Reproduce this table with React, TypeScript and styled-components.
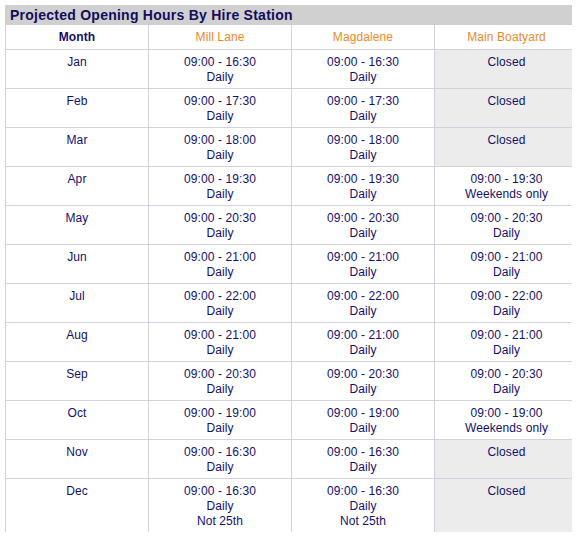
import React from "react";
import styled, { createGlobalStyle } from "styled-components";

const Global = createGlobalStyle`
  body {
    margin: 5px;
    background: #ffffff;
    font-family: "Liberation Sans", Arial, sans-serif;
  }
`;

const Wrapper = styled.div`
  width: 567px;
`;

const TitleBar = styled.div`
  height: 20px;
  background: #d0d0d0;
  color: #140c5c;
  font-weight: bold;
  font-size: 14px;
  letter-spacing: 0.25px;
  line-height: 20px;
  padding-left: 5px;
  box-sizing: border-box;
`;

const Grid = styled.div`
  display: grid;
  grid-template-columns: 143px 143px 143px 138px;
`;

const Cell = styled.div<{ $closed?: boolean; $last?: boolean; $edge?: boolean }>`
  box-sizing: border-box;
  border-left: 1px solid #d3d0e2;
  border-bottom: ${(p) => (p.$last ? "none" : "1px solid #d3d0e2")};
  background: ${(p) => (p.$closed ? "#ececec" : "#ffffff")};
  padding: 5px 2px 3px ${(p) => (p.$edge ? "8px" : "2px")};
  text-align: center;
  font-size: 12px;
  letter-spacing: 0.1px;
  line-height: 15px;
  color: #14106a;
`;

const HeadCell = styled(Cell)<{ $accent?: boolean }>`
  padding-bottom: 4px;
  color: ${(p) => (p.$accent ? "#e98a2c" : "#140c6a")};
  font-weight: ${(p) => (p.$accent ? "normal" : "bold")};
  background: #ffffff;
`;

const Line = styled.div``;

type Hours = string[] | null;

const rows: { m: string; mill: string[]; mag: string[]; main: Hours }[] = [
  { m: "Jan", mill: ["09:00 - 16:30", "Daily"], mag: ["09:00 - 16:30", "Daily"], main: null },
  { m: "Feb", mill: ["09:00 - 17:30", "Daily"], mag: ["09:00 - 17:30", "Daily"], main: null },
  { m: "Mar", mill: ["09:00 - 18:00", "Daily"], mag: ["09:00 - 18:00", "Daily"], main: null },
  { m: "Apr", mill: ["09:00 - 19:30", "Daily"], mag: ["09:00 - 19:30", "Daily"], main: ["09:00 - 19:30", "Weekends only"] },
  { m: "May", mill: ["09:00 - 20:30", "Daily"], mag: ["09:00 - 20:30", "Daily"], main: ["09:00 - 20:30", "Daily"] },
  { m: "Jun", mill: ["09:00 - 21:00", "Daily"], mag: ["09:00 - 21:00", "Daily"], main: ["09:00 - 21:00", "Daily"] },
  { m: "Jul", mill: ["09:00 - 22:00", "Daily"], mag: ["09:00 - 22:00", "Daily"], main: ["09:00 - 22:00", "Daily"] },
  { m: "Aug", mill: ["09:00 - 21:00", "Daily"], mag: ["09:00 - 21:00", "Daily"], main: ["09:00 - 21:00", "Daily"] },
  { m: "Sep", mill: ["09:00 - 20:30", "Daily"], mag: ["09:00 - 20:30", "Daily"], main: ["09:00 - 20:30", "Daily"] },
  { m: "Oct", mill: ["09:00 - 19:00", "Daily"], mag: ["09:00 - 19:00", "Daily"], main: ["09:00 - 19:00", "Weekends only"] },
  { m: "Nov", mill: ["09:00 - 16:30", "Daily"], mag: ["09:00 - 16:30", "Daily"], main: null },
  { m: "Dec", mill: ["09:00 - 16:30", "Daily", "Not 25th"], mag: ["09:00 - 16:30", "Daily", "Not 25th"], main: null },
];

const Lines = ({ items }: { items: string[] }) => (
  <>
    {items.map((t, i) => (
      <Line key={i}>{t}</Line>
    ))}
  </>
);

export default function App() {
  return (
    <>
      <Global />
      <Wrapper>
        <TitleBar>Projected Opening Hours By Hire Station</TitleBar>
        <Grid>
          <HeadCell>Month</HeadCell>
          <HeadCell $accent>Mill Lane</HeadCell>
          <HeadCell $accent>Magdalene</HeadCell>
          <HeadCell $accent $edge>Main Boatyard</HeadCell>
          {rows.map((r, i) => {
            const last = i === rows.length - 1;
            return (
              <React.Fragment key={r.m}>
                <Cell $last={last}>{r.m}</Cell>
                <Cell $last={last}><Lines items={r.mill} /></Cell>
                <Cell $last={last}><Lines items={r.mag} /></Cell>
                <Cell $last={last} $edge $closed={!r.main}>
                  {r.main ? <Lines items={r.main} /> : "Closed"}
                </Cell>
              </React.Fragment>
            );
          })}
        </Grid>
      </Wrapper>
    </>
  );
}
